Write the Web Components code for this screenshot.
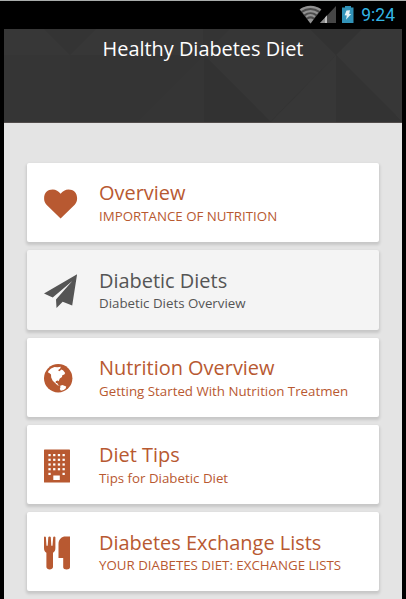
<!DOCTYPE html>
<html lang="en">
<head>
<meta charset="utf-8">
<title>Healthy Diabetes Diet</title>
<style>
  html, body { margin: 0; height: 100%; overflow: hidden; }
  body { font-family: "Open Sans", "Noto Sans", sans-serif; background: #000; }
</style>
</head>
<body>
<diet-app>
  <status-bar slot="status" time="9:24"></status-bar>
  <app-header slot="header">Healthy Diabetes Diet</app-header>
  <menu-card icon="heart">Overview<span slot="sub">IMPORTANCE OF NUTRITION</span></menu-card>
  <menu-card icon="plane" active>Diabetic Diets<span slot="sub">Diabetic Diets Overview</span></menu-card>
  <menu-card icon="globe">Nutrition Overview<span slot="sub">Getting Started With Nutrition Treatmen</span></menu-card>
  <menu-card icon="building">Diet Tips<span slot="sub">Tips for Diabetic Diet</span></menu-card>
  <menu-card icon="cutlery">Diabetes Exchange Lists<span slot="sub">YOUR DIABETES DIET: EXCHANGE LISTS</span></menu-card>
</diet-app>

<script>
{
  const windows = [4.4, 9.1, 13.8, 18.5];
  const buildingDots = [5, 9.7, 14.4, 19.1, 23.8]
    .map((y, row) =>
      windows
        .filter((x, col) => row < 4 || col === 0 || col === 3)
        .map((x) => `<rect x="${x}" y="${y}" width="2.3" height="2.2" fill="#fff"/>`)
        .join("")
    )
    .join("");

  const ICONS = {
    heart: `<path d="M16.6 29.4 2.5 15.7C.8 14 .1 12 .1 9.3.1 3.8 3.6.5 8.7.5c3.2 0 5.8 1.8 7.9 4.2C18.7 2.3 21.3.5 24.5.5c5.1 0 8.6 3.3 8.6 8.8 0 2.7-.7 4.7-2.4 6.4Z"/>`,
    plane: `<path d="M33.1.2 28.2 31.4 18.7 27.7 12.5 34 12 25.5 28.3 6.9 8.7 23.500 0 19.500Z"/>`,
    globe: `<circle cx="14.2" cy="14.2" r="14.2"/>
      <path fill="#fff" d="M4.300 8.800 4.200 7.200 7 4.600 10.500 3 13.500 3.200 16.800 2.800 16.200 4.400 14 6.200 15.600 7.300 17.200 5.400 19 6.200 21.200 9 20.300 10.600 18.300 11.200 18 13 15.800 14.600 14.600 17.200 13.600 16.500 11.700 17.300 11.800 19 13.200 19 13.800 20.500 15.600 21.600 13.400 21.200 10.600 18.600 8.700 16.800 7.200 13.400 7 10.400 5.600 9.200Z"/>
      <path fill="#fff" d="m16.200 21.800 2.300-.8 3.700 1.600-.5 1.900-2 1.500-2.800.8-1.100-1.900.6-1.600Z"/>`,
    building: `<rect x="0" y=".5" width="26" height="33" rx=".6"/>${buildingDots}
      <rect x="9.300" y="26.500" width="6.500" height="4.500" fill="#fff"/>`,
    cutlery: `<path d="M0 1.200C0 .2 1.700.2 1.900 1.200l.6 8.600h1.200L4.300 1.200C4.500.2 6.600.2 6.800 1.200l.5 8.600h1.200L9.200 1.200c.2-1 2-1 2.200 0V12c0 2.600-.9 4-2.400 4.800V31c0 3.200-6.600 3.200-6.600 0V16.800C.9 16 0 14.600 0 12Z"/>
      <path d="M26 .5v30.700c0 3-6.800 3-6.800 0V22h-4.700V8C14.500 3 18 .5 21.300.5Z"/>`
  };

  class DietApp extends HTMLElement {
    connectedCallback() {
      this.attachShadow({ mode: "open" }).innerHTML = `
        <style>
        :host {
          display: flex;
          flex-direction: column;
          box-sizing: border-box;
          height: 599px;
          padding: 0 4px;
          border-top: 1px solid #a9adac;
          background: #000;
        }

        main {
          flex: 1;
          display: flex;
          flex-direction: column;
          gap: 8px;
          padding: 40px 23px 0;
          background: #e4e4e4;
          overflow: hidden;
        }
        </style>
        <slot name="status"></slot>
        <slot name="header"></slot>
        <main><slot></slot></main>
      `;
    }
  }

  class StatusBar extends HTMLElement {
    connectedCallback() {
      this.attachShadow({ mode: "open" }).innerHTML = `
        <style>
        :host {
          display: flex;
          justify-content: flex-end;
          flex: none;
          height: 28px;
          padding-right: 7px;
          font: 17.5px/29px Roboto, sans-serif;
          color: #33b5e5;
        }

        svg {
          display: block;
          margin-right: 7px;
        }
        </style>
        <svg width="55" height="28" viewBox="299 1 55 28">
          <path fill="#4c4c4c" d="m310.500 23.500-11-14c6-4.700 16-4.700 22 0Z"/>
          <g fill="none" stroke="#929292" stroke-width="2.200">
            <path d="M300.500 10.200c6-4.400 14-4.400 20 0"/>
            <path d="M303.300 13.500c4.300-3.200 10.100-3.200 14.400 0"/>
            <path d="M306 16.900c2.700-2 6.300-2 9 0"/>
          </g>
          <path fill="#929292" d="m310.500 23.500-3-4c1.800-1.200 4.200-1.200 6 0Z"/>
          <path fill="#464646" d="M336 6v17h-16Z"/>
          <path fill="#8b8b8b" d="M327 15.500V23h-7Z"/>
          <path fill="#c0c0c0" d="M325 17.500l2-2V23h-2Z"/>
          <path fill="#3293b8" d="M345 6h6v1.500h2.500V23H342V7.500h3Z"/>
          <path fill="#e5f2f5" d="m346.500 10.500 3.500-.3-.8 3.700 2 .1-5.200 5.700.8-4.200-2.200-.2Z"/>
        </svg>
        <span>${this.getAttribute("time")}</span>
      `;
    }
  }

  class AppHeader extends HTMLElement {
    connectedCallback() {
      this.attachShadow({ mode: "open" }).innerHTML = `
        <style>
        :host {
          display: grid;
          flex: none;
          height: 94px;
          box-sizing: border-box;
          border-bottom: 1px solid #514c4b;
          background: #343434;
          color: #fff;
          font-size: 19.9px;
          line-height: 40px;
          text-align: center;
        }

        svg, div {
          grid-area: 1 / 1;
        }
        </style>
        <svg width="398" height="93" viewBox="4 29 398 93">
          <path fill="#373737" d="M4 29h40l26 26H4ZM70 55l26-26h107v26Z"/>
          <path fill="#353535" d="M4 55h66v67H4ZM137 122l67-67v67Z"/>
          <path fill="#363636" d="M204 55l26-26h80l26 26-66 67Z"/>
          <path fill="#323232" d="M204 55l67 67h-67ZM310 29h52l-26 26Z"/>
          <path fill="#373737" d="M336 55l26-26h40v93ZM271 122l65-67v67Z"/>
          <path fill="#333" d="M336 55l66 67h-66Z"/>
        </svg>
        <div><slot></slot></div>
      `;
    }
  }

  class MenuCard extends HTMLElement {
    connectedCallback() {
      this.attachShadow({ mode: "open" }).innerHTML = `
        <style>
        :host {
          display: flex;
          flex: none;
          box-sizing: border-box;
          height: 79.3px;
          padding-left: 17px;
          border-radius: 2px;
          background: #fff;
          box-shadow: 0 2px 3px 1px rgba(0, 0, 0, 0.13);
          color: #b85931;
        }

        :host([active]) {
          background: #f4f4f4;
          color: #555;
        }

        svg {
          flex: none;
          width: 34px;
          height: 34px;
          margin: 24px 21px 0 0;
          fill: currentColor;
        }

        :host([icon="heart"]) svg,
        :host([icon="globe"]) svg {
          margin-top: 26px;
        }

        .title {
          padding-top: 16.4px;
          font-size: 19.95px;
          line-height: 27px;
          white-space: nowrap;
        }

        .sub {
          padding-top: 0.6px;
          font-size: 13.3px;
          line-height: 19px;
          white-space: nowrap;
        }
        </style>
        <svg viewBox="0 0 34 34">${ICONS[this.getAttribute("icon")]}</svg>
        <div>
          <div class="title"><slot></slot></div>
          <div class="sub"><slot name="sub"></slot></div>
        </div>
      `;
    }
  }

  customElements.define("diet-app", DietApp);
  customElements.define("status-bar", StatusBar);
  customElements.define("app-header", AppHeader);
  customElements.define("menu-card", MenuCard);
}
</script>
</body>
</html>
